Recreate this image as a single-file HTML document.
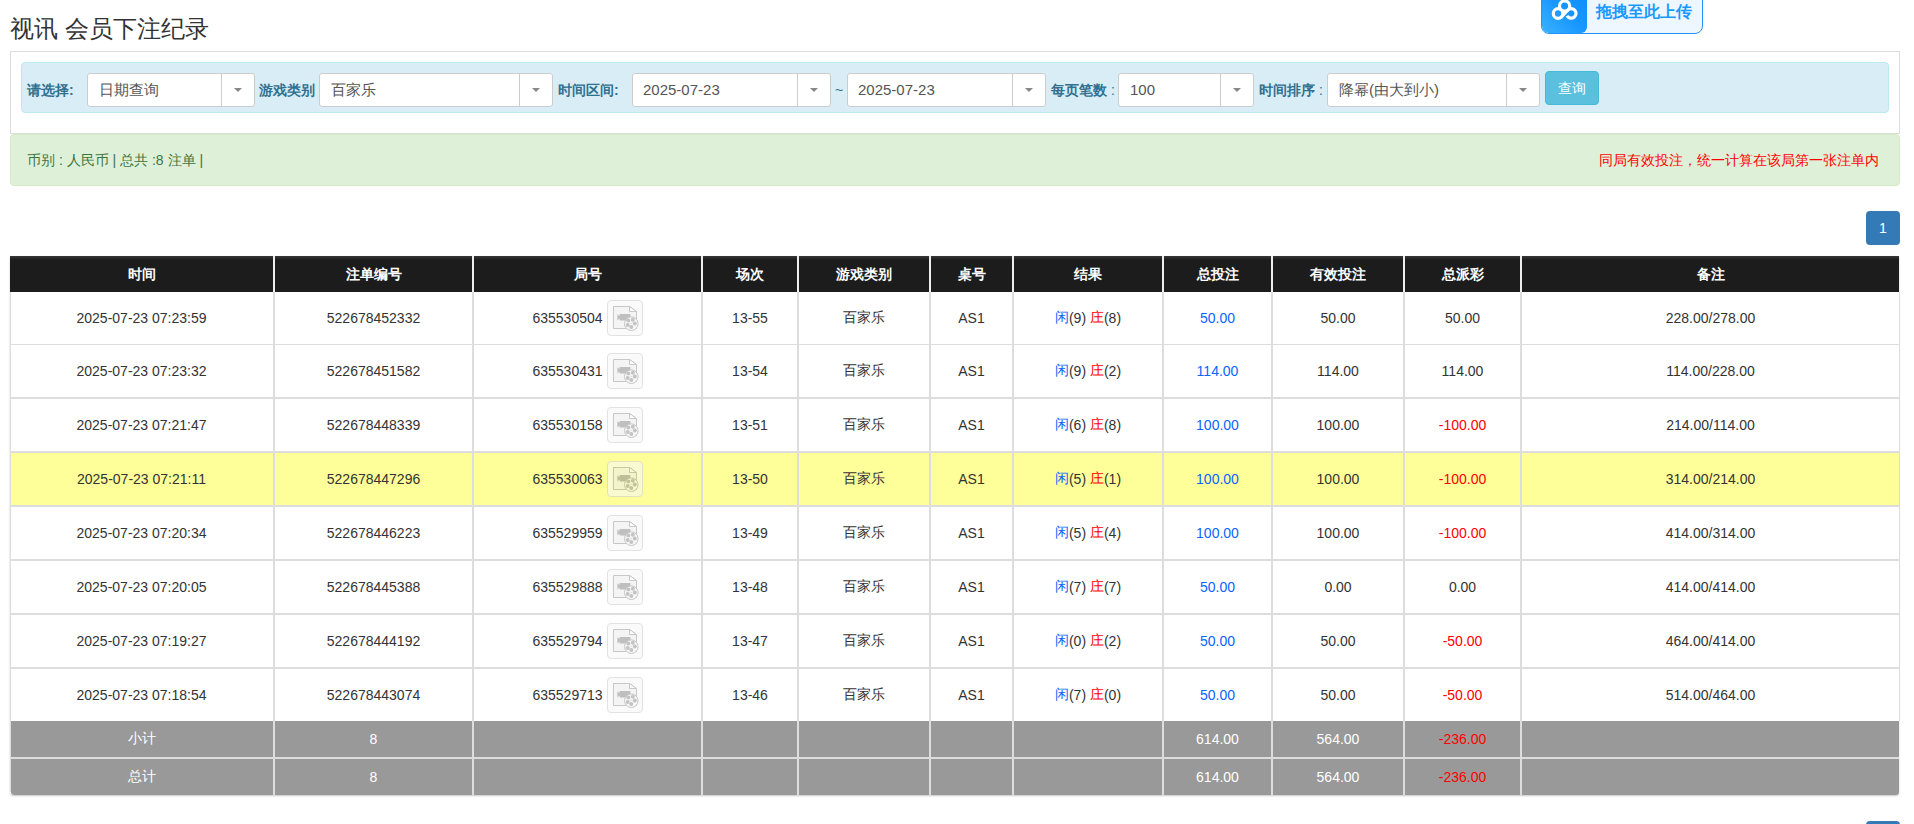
<!DOCTYPE html>
<html><head><meta charset="utf-8"><title>视讯 会员下注纪录</title>
<style>
*{box-sizing:border-box}
html,body{margin:0;padding:0;background:#fff;width:1914px;height:824px;overflow:hidden;position:relative}
body{font-family:"Liberation Sans",sans-serif;font-size:14px;color:#333}
.abs{position:absolute}
.title{position:absolute;left:10px;top:14px;font-size:24px;line-height:30px;color:#333;white-space:nowrap}
.upl{position:absolute;left:1541px;top:-10px;width:162px;height:44px;border:1.5px solid #1f94ff;border-radius:8px;background:#eef7ff;overflow:hidden}
.upl .ic{position:absolute;left:-1px;top:-1px;width:46px;height:43px;background:linear-gradient(225deg,#0a8dff 0%,#1897ff 50%,#3cb3ff 100%);border-radius:0 0 6px 7px}
.upl .tx{position:absolute;left:54px;top:11px;font-size:16px;font-weight:bold;color:#1a9aff;line-height:20px;white-space:nowrap;letter-spacing:0px}
.panel{position:absolute;left:10px;top:51px;width:1890px;height:83px;border:1px solid #ddd;background:#fff}
.bar{position:absolute;left:21px;top:62px;width:1868px;height:51px;border:1px solid #bce8f1;border-radius:4px;background:#d9edf7}
.lbl{position:absolute;top:81px;font-weight:bold;color:#31708f;line-height:18px;white-space:nowrap}
.n{font-weight:normal}
.sel{position:absolute;top:73px;height:34px;border:1px solid #ccc;border-radius:3px;background:#fff}
.sel .st{position:absolute;top:6px;line-height:20px;font-size:15px;color:#555;white-space:nowrap}
.sel .sd{position:absolute;top:0;bottom:0;width:1px;background:#ccc}
.sel .car{position:absolute;top:14px;width:0;height:0;border-left:4px solid transparent;border-right:4px solid transparent;border-top:4px solid #888}
.btn{position:absolute;left:1545px;top:71px;width:54px;height:34px;background:#5bc0de;border:1px solid #46b8da;border-radius:4px;color:#fff;text-align:center;line-height:32px}
.alert{position:absolute;left:10px;top:134px;width:1890px;height:52px;border:1px solid #d6e9c6;border-radius:4px;background:#dff0d8}
.al{position:absolute;left:27px;top:151px;color:#3c763d;line-height:18px;white-space:nowrap}
.ar{position:absolute;right:35px;top:151px;color:#f00;line-height:18px;white-space:nowrap}
.pg{position:absolute;left:1866px;width:34px;height:34px;background:#337ab7;border-radius:4px;color:#fff;text-align:center;line-height:34px}
.thead{position:absolute;left:10px;top:256px;width:1889px;height:36px;background:linear-gradient(#383838 0px,#1c1c1c 4px,#1c1c1c 100%)}
.thead .hc{position:absolute;top:0px;height:36px;line-height:36px;text-align:center;color:#fff;font-weight:bold;margin-left:-10px}
.hv{position:absolute;top:256px;height:36px;width:2px;background:#eee}
.row{position:absolute;left:10px;width:1889px}
.row .c{position:absolute;top:0;bottom:0;margin-left:-10px;display:flex;align-items:center;justify-content:center;white-space:nowrap}
.sum{background:#999;color:#fff}
.in{display:inline-flex;align-items:center;white-space:pre}
.hl{position:absolute;left:10px;width:1889px;background:#ddd}
.vl{position:absolute;width:2px;background:#ddd}
.blue{color:#0a64ff}
.red{color:#f00}
.vb{display:inline-block;width:36px;height:36px;border:1px solid #d0d0d0;border-radius:4px;background:#f7f7f7;opacity:.6;margin-left:4px;position:relative}
.vb svg{position:absolute;left:0;top:0}
</style></head><body>
<div class="title">视讯 会员下注纪录</div>
<div class="upl"><div class="ic"><svg width="47" height="44" viewBox="0 0 47 44" style="position:absolute;left:0;top:0"><g fill="none" stroke="#fff" stroke-width="3.2" transform="translate(0.7 0.6)"><circle cx="22.9" cy="15.5" r="5.1"/><circle cx="16.4" cy="22.9" r="4.8"/><path d="M25.57 20.04A4.8 4.8 0 1 1 25.34 25.2"/><path d="M19.7 26.3L25.8 19.9" stroke-linecap="round"/></g></svg></div><div class="tx">拖拽至此上传</div></div>
<div class="panel"></div>
<div class="bar"></div>
<div class="lbl" style="left:27px">请选择:</div><div class="sel" style="left:87px;width:168px"><span class="st" style="left:11px">日期查询</span><span class="sd" style="left:133px"></span><span class="car" style="left:146px"></span></div><div class="lbl" style="left:259px">游戏类别</div><div class="sel" style="left:319px;width:234px"><span class="st" style="left:11px">百家乐</span><span class="sd" style="left:199px"></span><span class="car" style="left:212px"></span></div><div class="lbl" style="left:558px">时间区间:</div><div class="sel" style="left:632px;width:199px"><span class="st" style="left:10px">2025-07-23</span><span class="sd" style="left:164px"></span><span class="car" style="left:177px"></span></div><div class="lbl n" style="left:835px">~</div><div class="sel" style="left:847px;width:199px"><span class="st" style="left:10px">2025-07-23</span><span class="sd" style="left:164px"></span><span class="car" style="left:177px"></span></div><div class="lbl" style="left:1051px">每页笔数<span class="n"> :</span></div><div class="sel" style="left:1118px;width:136px"><span class="st" style="left:11px">100</span><span class="sd" style="left:101px"></span><span class="car" style="left:114px"></span></div><div class="lbl" style="left:1259px">时间排序<span class="n"> :</span></div><div class="sel" style="left:1327px;width:213px"><span class="st" style="left:11px">降幂(由大到小)</span><span class="sd" style="left:178px"></span><span class="car" style="left:191px"></span></div><div class="btn">查询</div>
<div class="alert"></div>
<div class="al">币别 : 人民币 | 总共 :8 注单 |</div>
<div class="ar">同局有效投注，统一计算在该局第一张注单内</div>
<div class="pg" style="top:211px">1</div>
<div style="position:absolute;left:10px;top:256px;width:1889px;height:539px;border-radius:0 0 3px 3px;box-shadow:0 1px 2px rgba(0,0,0,.22)"></div>
<div class="thead"><div class="hc" style="left:10px;width:263px">时间</div><div class="hc" style="left:275px;width:197px">注单编号</div><div class="hc" style="left:474px;width:227px">局号</div><div class="hc" style="left:703px;width:94px">场次</div><div class="hc" style="left:799px;width:130px">游戏类别</div><div class="hc" style="left:931px;width:81px">桌号</div><div class="hc" style="left:1014px;width:148px">结果</div><div class="hc" style="left:1164px;width:107px">总投注</div><div class="hc" style="left:1273px;width:130px">有效投注</div><div class="hc" style="left:1405px;width:115px">总派彩</div><div class="hc" style="left:1522px;width:377px">备注</div></div>
<div class="row" style="top:292px;height:52px;background:#fff"><div class="c" style="left:10px;width:263px"><span class="in">2025-07-23 07:23:59</span></div><div class="c" style="left:275px;width:197px"><span class="in">522678452332</span></div><div class="c" style="left:474px;width:227px"><span class="in"><span class="ju">635530504</span><span class="vb"><svg width="34" height="34" viewBox="0 0 34 34"><path d="M5.5 5.5H21.5L28.5 10.5V27.5H5.5Z" fill="#eee" stroke="#a3a3a3" stroke-width="1"/><path d="M21.5 5.5V10.5H28.5L21.5 5.5Z" fill="#fcfcfc" stroke="#a3a3a3" stroke-width="1"/><path d="M9.4 13.2L11.6 15V13.1H22.4V19.5H11.6V17.6L9.4 19.6Z" fill="#969696"/><circle cx="23.3" cy="22.7" r="6.8" fill="#f3f3f3" stroke="#a3a3a3" stroke-width="1"/><g fill="#9d9d9d"><circle cx="20.3" cy="19.6" r="2"/><circle cx="24.8" cy="18.8" r="2"/><circle cx="26.8" cy="22.5" r="2"/><circle cx="19.7" cy="23.9" r="2"/><circle cx="23.3" cy="26" r="2"/></g><circle cx="23" cy="22.3" r="0.6" fill="#aaa"/></svg></span></span></div><div class="c" style="left:703px;width:94px"><span class="in">13-55</span></div><div class="c" style="left:799px;width:130px"><span class="in">百家乐</span></div><div class="c" style="left:931px;width:81px"><span class="in">AS1</span></div><div class="c" style="left:1014px;width:148px"><span class="in"><span class="blue">闲</span>(9) <span class="red">庄</span>(8)</span></div><div class="c" style="left:1164px;width:107px"><span class="in"><span class="blue">50.00</span></span></div><div class="c" style="left:1273px;width:130px"><span class="in">50.00</span></div><div class="c" style="left:1405px;width:115px"><span class="in">50.00</span></div><div class="c" style="left:1522px;width:377px"><span class="in">228.00/278.00</span></div></div>
<div class="row" style="top:345px;height:52px;background:#fff"><div class="c" style="left:10px;width:263px"><span class="in">2025-07-23 07:23:32</span></div><div class="c" style="left:275px;width:197px"><span class="in">522678451582</span></div><div class="c" style="left:474px;width:227px"><span class="in"><span class="ju">635530431</span><span class="vb"><svg width="34" height="34" viewBox="0 0 34 34"><path d="M5.5 5.5H21.5L28.5 10.5V27.5H5.5Z" fill="#eee" stroke="#a3a3a3" stroke-width="1"/><path d="M21.5 5.5V10.5H28.5L21.5 5.5Z" fill="#fcfcfc" stroke="#a3a3a3" stroke-width="1"/><path d="M9.4 13.2L11.6 15V13.1H22.4V19.5H11.6V17.6L9.4 19.6Z" fill="#969696"/><circle cx="23.3" cy="22.7" r="6.8" fill="#f3f3f3" stroke="#a3a3a3" stroke-width="1"/><g fill="#9d9d9d"><circle cx="20.3" cy="19.6" r="2"/><circle cx="24.8" cy="18.8" r="2"/><circle cx="26.8" cy="22.5" r="2"/><circle cx="19.7" cy="23.9" r="2"/><circle cx="23.3" cy="26" r="2"/></g><circle cx="23" cy="22.3" r="0.6" fill="#aaa"/></svg></span></span></div><div class="c" style="left:703px;width:94px"><span class="in">13-54</span></div><div class="c" style="left:799px;width:130px"><span class="in">百家乐</span></div><div class="c" style="left:931px;width:81px"><span class="in">AS1</span></div><div class="c" style="left:1014px;width:148px"><span class="in"><span class="blue">闲</span>(9) <span class="red">庄</span>(2)</span></div><div class="c" style="left:1164px;width:107px"><span class="in"><span class="blue">114.00</span></span></div><div class="c" style="left:1273px;width:130px"><span class="in">114.00</span></div><div class="c" style="left:1405px;width:115px"><span class="in">114.00</span></div><div class="c" style="left:1522px;width:377px"><span class="in">114.00/228.00</span></div></div>
<div class="row" style="top:399px;height:52px;background:#fff"><div class="c" style="left:10px;width:263px"><span class="in">2025-07-23 07:21:47</span></div><div class="c" style="left:275px;width:197px"><span class="in">522678448339</span></div><div class="c" style="left:474px;width:227px"><span class="in"><span class="ju">635530158</span><span class="vb"><svg width="34" height="34" viewBox="0 0 34 34"><path d="M5.5 5.5H21.5L28.5 10.5V27.5H5.5Z" fill="#eee" stroke="#a3a3a3" stroke-width="1"/><path d="M21.5 5.5V10.5H28.5L21.5 5.5Z" fill="#fcfcfc" stroke="#a3a3a3" stroke-width="1"/><path d="M9.4 13.2L11.6 15V13.1H22.4V19.5H11.6V17.6L9.4 19.6Z" fill="#969696"/><circle cx="23.3" cy="22.7" r="6.8" fill="#f3f3f3" stroke="#a3a3a3" stroke-width="1"/><g fill="#9d9d9d"><circle cx="20.3" cy="19.6" r="2"/><circle cx="24.8" cy="18.8" r="2"/><circle cx="26.8" cy="22.5" r="2"/><circle cx="19.7" cy="23.9" r="2"/><circle cx="23.3" cy="26" r="2"/></g><circle cx="23" cy="22.3" r="0.6" fill="#aaa"/></svg></span></span></div><div class="c" style="left:703px;width:94px"><span class="in">13-51</span></div><div class="c" style="left:799px;width:130px"><span class="in">百家乐</span></div><div class="c" style="left:931px;width:81px"><span class="in">AS1</span></div><div class="c" style="left:1014px;width:148px"><span class="in"><span class="blue">闲</span>(6) <span class="red">庄</span>(8)</span></div><div class="c" style="left:1164px;width:107px"><span class="in"><span class="blue">100.00</span></span></div><div class="c" style="left:1273px;width:130px"><span class="in">100.00</span></div><div class="c" style="left:1405px;width:115px"><span class="in"><span class="red">-100.00</span></span></div><div class="c" style="left:1522px;width:377px"><span class="in">214.00/114.00</span></div></div>
<div class="row" style="top:453px;height:52px;background:#ffff99"><div class="c" style="left:10px;width:263px"><span class="in">2025-07-23 07:21:11</span></div><div class="c" style="left:275px;width:197px"><span class="in">522678447296</span></div><div class="c" style="left:474px;width:227px"><span class="in"><span class="ju">635530063</span><span class="vb"><svg width="34" height="34" viewBox="0 0 34 34"><path d="M5.5 5.5H21.5L28.5 10.5V27.5H5.5Z" fill="#eee" stroke="#a3a3a3" stroke-width="1"/><path d="M21.5 5.5V10.5H28.5L21.5 5.5Z" fill="#fcfcfc" stroke="#a3a3a3" stroke-width="1"/><path d="M9.4 13.2L11.6 15V13.1H22.4V19.5H11.6V17.6L9.4 19.6Z" fill="#969696"/><circle cx="23.3" cy="22.7" r="6.8" fill="#f3f3f3" stroke="#a3a3a3" stroke-width="1"/><g fill="#9d9d9d"><circle cx="20.3" cy="19.6" r="2"/><circle cx="24.8" cy="18.8" r="2"/><circle cx="26.8" cy="22.5" r="2"/><circle cx="19.7" cy="23.9" r="2"/><circle cx="23.3" cy="26" r="2"/></g><circle cx="23" cy="22.3" r="0.6" fill="#aaa"/></svg></span></span></div><div class="c" style="left:703px;width:94px"><span class="in">13-50</span></div><div class="c" style="left:799px;width:130px"><span class="in">百家乐</span></div><div class="c" style="left:931px;width:81px"><span class="in">AS1</span></div><div class="c" style="left:1014px;width:148px"><span class="in"><span class="blue">闲</span>(5) <span class="red">庄</span>(1)</span></div><div class="c" style="left:1164px;width:107px"><span class="in"><span class="blue">100.00</span></span></div><div class="c" style="left:1273px;width:130px"><span class="in">100.00</span></div><div class="c" style="left:1405px;width:115px"><span class="in"><span class="red">-100.00</span></span></div><div class="c" style="left:1522px;width:377px"><span class="in">314.00/214.00</span></div></div>
<div class="row" style="top:507px;height:52px;background:#fff"><div class="c" style="left:10px;width:263px"><span class="in">2025-07-23 07:20:34</span></div><div class="c" style="left:275px;width:197px"><span class="in">522678446223</span></div><div class="c" style="left:474px;width:227px"><span class="in"><span class="ju">635529959</span><span class="vb"><svg width="34" height="34" viewBox="0 0 34 34"><path d="M5.5 5.5H21.5L28.5 10.5V27.5H5.5Z" fill="#eee" stroke="#a3a3a3" stroke-width="1"/><path d="M21.5 5.5V10.5H28.5L21.5 5.5Z" fill="#fcfcfc" stroke="#a3a3a3" stroke-width="1"/><path d="M9.4 13.2L11.6 15V13.1H22.4V19.5H11.6V17.6L9.4 19.6Z" fill="#969696"/><circle cx="23.3" cy="22.7" r="6.8" fill="#f3f3f3" stroke="#a3a3a3" stroke-width="1"/><g fill="#9d9d9d"><circle cx="20.3" cy="19.6" r="2"/><circle cx="24.8" cy="18.8" r="2"/><circle cx="26.8" cy="22.5" r="2"/><circle cx="19.7" cy="23.9" r="2"/><circle cx="23.3" cy="26" r="2"/></g><circle cx="23" cy="22.3" r="0.6" fill="#aaa"/></svg></span></span></div><div class="c" style="left:703px;width:94px"><span class="in">13-49</span></div><div class="c" style="left:799px;width:130px"><span class="in">百家乐</span></div><div class="c" style="left:931px;width:81px"><span class="in">AS1</span></div><div class="c" style="left:1014px;width:148px"><span class="in"><span class="blue">闲</span>(5) <span class="red">庄</span>(4)</span></div><div class="c" style="left:1164px;width:107px"><span class="in"><span class="blue">100.00</span></span></div><div class="c" style="left:1273px;width:130px"><span class="in">100.00</span></div><div class="c" style="left:1405px;width:115px"><span class="in"><span class="red">-100.00</span></span></div><div class="c" style="left:1522px;width:377px"><span class="in">414.00/314.00</span></div></div>
<div class="row" style="top:561px;height:52px;background:#fff"><div class="c" style="left:10px;width:263px"><span class="in">2025-07-23 07:20:05</span></div><div class="c" style="left:275px;width:197px"><span class="in">522678445388</span></div><div class="c" style="left:474px;width:227px"><span class="in"><span class="ju">635529888</span><span class="vb"><svg width="34" height="34" viewBox="0 0 34 34"><path d="M5.5 5.5H21.5L28.5 10.5V27.5H5.5Z" fill="#eee" stroke="#a3a3a3" stroke-width="1"/><path d="M21.5 5.5V10.5H28.5L21.5 5.5Z" fill="#fcfcfc" stroke="#a3a3a3" stroke-width="1"/><path d="M9.4 13.2L11.6 15V13.1H22.4V19.5H11.6V17.6L9.4 19.6Z" fill="#969696"/><circle cx="23.3" cy="22.7" r="6.8" fill="#f3f3f3" stroke="#a3a3a3" stroke-width="1"/><g fill="#9d9d9d"><circle cx="20.3" cy="19.6" r="2"/><circle cx="24.8" cy="18.8" r="2"/><circle cx="26.8" cy="22.5" r="2"/><circle cx="19.7" cy="23.9" r="2"/><circle cx="23.3" cy="26" r="2"/></g><circle cx="23" cy="22.3" r="0.6" fill="#aaa"/></svg></span></span></div><div class="c" style="left:703px;width:94px"><span class="in">13-48</span></div><div class="c" style="left:799px;width:130px"><span class="in">百家乐</span></div><div class="c" style="left:931px;width:81px"><span class="in">AS1</span></div><div class="c" style="left:1014px;width:148px"><span class="in"><span class="blue">闲</span>(7) <span class="red">庄</span>(7)</span></div><div class="c" style="left:1164px;width:107px"><span class="in"><span class="blue">50.00</span></span></div><div class="c" style="left:1273px;width:130px"><span class="in">0.00</span></div><div class="c" style="left:1405px;width:115px"><span class="in">0.00</span></div><div class="c" style="left:1522px;width:377px"><span class="in">414.00/414.00</span></div></div>
<div class="row" style="top:615px;height:52px;background:#fff"><div class="c" style="left:10px;width:263px"><span class="in">2025-07-23 07:19:27</span></div><div class="c" style="left:275px;width:197px"><span class="in">522678444192</span></div><div class="c" style="left:474px;width:227px"><span class="in"><span class="ju">635529794</span><span class="vb"><svg width="34" height="34" viewBox="0 0 34 34"><path d="M5.5 5.5H21.5L28.5 10.5V27.5H5.5Z" fill="#eee" stroke="#a3a3a3" stroke-width="1"/><path d="M21.5 5.5V10.5H28.5L21.5 5.5Z" fill="#fcfcfc" stroke="#a3a3a3" stroke-width="1"/><path d="M9.4 13.2L11.6 15V13.1H22.4V19.5H11.6V17.6L9.4 19.6Z" fill="#969696"/><circle cx="23.3" cy="22.7" r="6.8" fill="#f3f3f3" stroke="#a3a3a3" stroke-width="1"/><g fill="#9d9d9d"><circle cx="20.3" cy="19.6" r="2"/><circle cx="24.8" cy="18.8" r="2"/><circle cx="26.8" cy="22.5" r="2"/><circle cx="19.7" cy="23.9" r="2"/><circle cx="23.3" cy="26" r="2"/></g><circle cx="23" cy="22.3" r="0.6" fill="#aaa"/></svg></span></span></div><div class="c" style="left:703px;width:94px"><span class="in">13-47</span></div><div class="c" style="left:799px;width:130px"><span class="in">百家乐</span></div><div class="c" style="left:931px;width:81px"><span class="in">AS1</span></div><div class="c" style="left:1014px;width:148px"><span class="in"><span class="blue">闲</span>(0) <span class="red">庄</span>(2)</span></div><div class="c" style="left:1164px;width:107px"><span class="in"><span class="blue">50.00</span></span></div><div class="c" style="left:1273px;width:130px"><span class="in">50.00</span></div><div class="c" style="left:1405px;width:115px"><span class="in"><span class="red">-50.00</span></span></div><div class="c" style="left:1522px;width:377px"><span class="in">464.00/414.00</span></div></div>
<div class="row" style="top:669px;height:52px;background:#fff"><div class="c" style="left:10px;width:263px"><span class="in">2025-07-23 07:18:54</span></div><div class="c" style="left:275px;width:197px"><span class="in">522678443074</span></div><div class="c" style="left:474px;width:227px"><span class="in"><span class="ju">635529713</span><span class="vb"><svg width="34" height="34" viewBox="0 0 34 34"><path d="M5.5 5.5H21.5L28.5 10.5V27.5H5.5Z" fill="#eee" stroke="#a3a3a3" stroke-width="1"/><path d="M21.5 5.5V10.5H28.5L21.5 5.5Z" fill="#fcfcfc" stroke="#a3a3a3" stroke-width="1"/><path d="M9.4 13.2L11.6 15V13.1H22.4V19.5H11.6V17.6L9.4 19.6Z" fill="#969696"/><circle cx="23.3" cy="22.7" r="6.8" fill="#f3f3f3" stroke="#a3a3a3" stroke-width="1"/><g fill="#9d9d9d"><circle cx="20.3" cy="19.6" r="2"/><circle cx="24.8" cy="18.8" r="2"/><circle cx="26.8" cy="22.5" r="2"/><circle cx="19.7" cy="23.9" r="2"/><circle cx="23.3" cy="26" r="2"/></g><circle cx="23" cy="22.3" r="0.6" fill="#aaa"/></svg></span></span></div><div class="c" style="left:703px;width:94px"><span class="in">13-46</span></div><div class="c" style="left:799px;width:130px"><span class="in">百家乐</span></div><div class="c" style="left:931px;width:81px"><span class="in">AS1</span></div><div class="c" style="left:1014px;width:148px"><span class="in"><span class="blue">闲</span>(7) <span class="red">庄</span>(0)</span></div><div class="c" style="left:1164px;width:107px"><span class="in"><span class="blue">50.00</span></span></div><div class="c" style="left:1273px;width:130px"><span class="in">50.00</span></div><div class="c" style="left:1405px;width:115px"><span class="in"><span class="red">-50.00</span></span></div><div class="c" style="left:1522px;width:377px"><span class="in">514.00/464.00</span></div></div>
<div class="hl" style="top:344px;height:1px"></div>
<div class="hl" style="top:397px;height:2px"></div>
<div class="hl" style="top:451px;height:2px"></div>
<div class="hl" style="top:505px;height:2px"></div>
<div class="hl" style="top:559px;height:2px"></div>
<div class="hl" style="top:613px;height:2px"></div>
<div class="hl" style="top:667px;height:2px"></div>
<div class="row sum" style="top:721px;height:36px;left:11px;width:1888px;"><div style="position:absolute;left:-1px;top:0;height:36px"><div class="c" style="left:10px;width:263px"><span class="in">小计</span></div><div class="c" style="left:275px;width:197px"><span class="in">8</span></div><div class="c" style="left:474px;width:227px"><span class="in"></span></div><div class="c" style="left:703px;width:94px"><span class="in"></span></div><div class="c" style="left:799px;width:130px"><span class="in"></span></div><div class="c" style="left:931px;width:81px"><span class="in"></span></div><div class="c" style="left:1014px;width:148px"><span class="in"></span></div><div class="c" style="left:1164px;width:107px"><span class="in">614.00</span></div><div class="c" style="left:1273px;width:130px"><span class="in">564.00</span></div><div class="c" style="left:1405px;width:115px"><span class="in"><span class="red">-236.00</span></span></div><div class="c" style="left:1522px;width:377px"><span class="in"></span></div></div></div>
<div class="row sum" style="top:759px;height:36px;left:11px;width:1888px;border-radius:0 0 3px 3px;"><div style="position:absolute;left:-1px;top:0;height:36px"><div class="c" style="left:10px;width:263px"><span class="in">总计</span></div><div class="c" style="left:275px;width:197px"><span class="in">8</span></div><div class="c" style="left:474px;width:227px"><span class="in"></span></div><div class="c" style="left:703px;width:94px"><span class="in"></span></div><div class="c" style="left:799px;width:130px"><span class="in"></span></div><div class="c" style="left:931px;width:81px"><span class="in"></span></div><div class="c" style="left:1014px;width:148px"><span class="in"></span></div><div class="c" style="left:1164px;width:107px"><span class="in">614.00</span></div><div class="c" style="left:1273px;width:130px"><span class="in">564.00</span></div><div class="c" style="left:1405px;width:115px"><span class="in"><span class="red">-236.00</span></span></div><div class="c" style="left:1522px;width:377px"><span class="in"></span></div></div></div>
<div class="hl" style="top:757px;height:2px"></div>
<div class="vl" style="left:273px;top:292px;height:503px"></div>
<div class="vl" style="left:472px;top:292px;height:503px"></div>
<div class="vl" style="left:701px;top:292px;height:503px"></div>
<div class="vl" style="left:797px;top:292px;height:503px"></div>
<div class="vl" style="left:929px;top:292px;height:503px"></div>
<div class="vl" style="left:1012px;top:292px;height:503px"></div>
<div class="vl" style="left:1162px;top:292px;height:503px"></div>
<div class="vl" style="left:1271px;top:292px;height:503px"></div>
<div class="vl" style="left:1403px;top:292px;height:503px"></div>
<div class="vl" style="left:1520px;top:292px;height:503px"></div>
<div class="vl" style="left:10px;top:292px;height:500px;width:1px"></div>
<div class="vl" style="left:1899px;top:292px;height:429px;width:1px"></div>
<div class="hv" style="left:273px"></div>
<div class="hv" style="left:472px"></div>
<div class="hv" style="left:701px"></div>
<div class="hv" style="left:797px"></div>
<div class="hv" style="left:929px"></div>
<div class="hv" style="left:1012px"></div>
<div class="hv" style="left:1162px"></div>
<div class="hv" style="left:1271px"></div>
<div class="hv" style="left:1403px"></div>
<div class="hv" style="left:1520px"></div>
<div class="pg" style="top:821px"></div>
</body></html>
